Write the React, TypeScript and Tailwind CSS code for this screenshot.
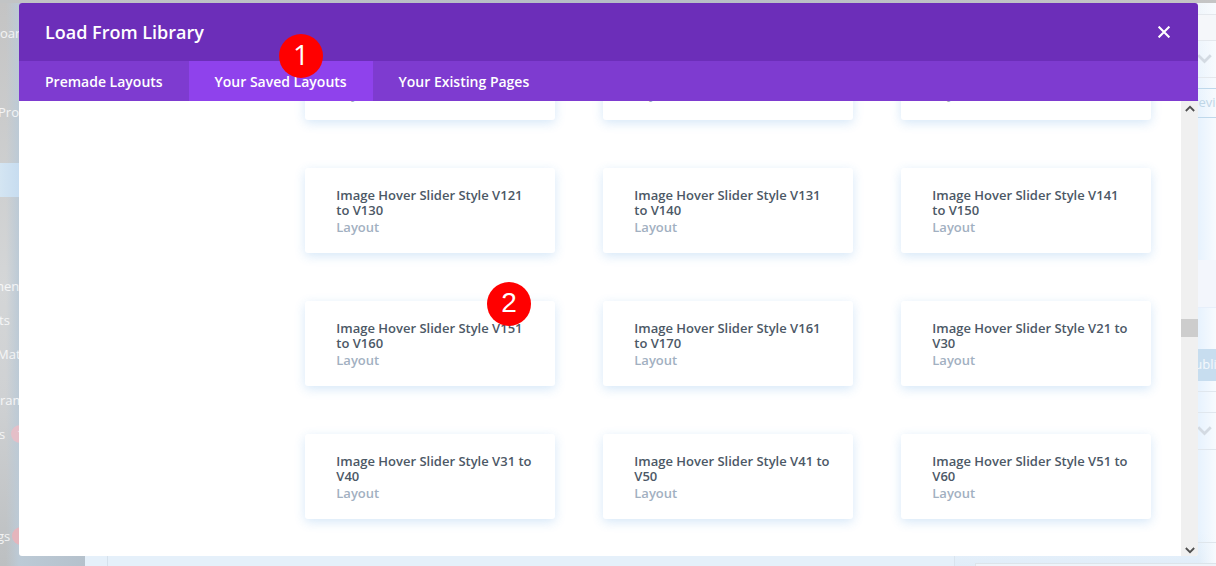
import React from "react";

const layouts: [string, string][] = [
  ["Image Hover Slider Style V1", "to V10"],
  ["Image Hover Slider Style V101", "to V110"],
  ["Image Hover Slider Style V111", "to V120"],
  ["Image Hover Slider Style V121", "to V130"],
  ["Image Hover Slider Style V131", "to V140"],
  ["Image Hover Slider Style V141", "to V150"],
  ["Image Hover Slider Style V151", "to V160"],
  ["Image Hover Slider Style V161", "to V170"],
  ["Image Hover Slider Style V21 to", "V30"],
  ["Image Hover Slider Style V31 to", "V40"],
  ["Image Hover Slider Style V41 to", "V50"],
  ["Image Hover Slider Style V51 to", "V60"],
];

function Chevron({ className, up = false }: { className: string; up?: boolean }) {
  return (
    <svg viewBox="0 0 12 8" className={className} fill="none" stroke="currentColor" strokeWidth="2.2">
      <path d={up ? "M1 7 6 2l5 5" : "M1 1l5 5 5-5"} />
    </svg>
  );
}

function Sidebar() {
  const item = "flex shrink-0 items-center whitespace-nowrap text-[13px] leading-[20px] text-white/80";
  return (
    <aside className="flex w-[85px] shrink-0 flex-col overflow-hidden bg-[linear-gradient(90deg,transparent_6px,#bccad6_19px,#b5c1cc_85px),linear-gradient(180deg,#c4c4c4,#d4d6d7_50%,#cfd1d3_70%,#bcbfc1)]">
      <div className={`${item} mt-[20px]`}>oard</div>
      <div className={`${item} mt-[59px] -ml-[2px]`}>Profile</div>
      <div className="mt-[41px] h-[34px] shrink-0 bg-gradient-to-r from-[#d4e5f2] to-[#c6dcf0] to-[20px]" />
      <div className={`${item} mt-[79px] -ml-[8px]`}>ments</div>
      <div className={`${item} mt-[14px] -ml-[1px]`}>ts</div>
      <div className={`${item} mt-[14px] -ml-[3px]`}>Material</div>
      <div className={`${item} mt-[26px]`}>rams</div>
      <div className={`${item} mt-[14px] -ml-[1px] gap-[6px]`}>
        <span>s</span>
        <span className="flex size-[18px] items-center justify-center rounded-full bg-[#e5bfc8] text-[10px]">1</span>
      </div>
      <div className={`${item} mt-[82px] -ml-[3px] gap-[2px]`}>
        <span>gs</span>
        <span className="size-[18px] rounded-full bg-[#e5b5bc]" />
      </div>
    </aside>
  );
}

function SettingsColumn() {
  return (
    <aside className="flex w-[262px] shrink-0 flex-col border-l border-[#d9e4ee] bg-[linear-gradient(90deg,transparent_244px,#f8fbfe_262px),linear-gradient(180deg,#f1f6fb,#e8f3fe_20%,#e8f3fe_94%,#e1edf8)] text-[13px]">
      <div className="mt-[11px] flex h-[27px] shrink-0 border-y border-[#e4e8ed] bg-[#f5f7fa]" />
      <div className="flex h-[37px] shrink-0 items-center justify-end border-b border-[#e4e8ed] pr-[4px] text-[#d3dae2]">
        <Chevron className="h-[10px] w-[15px]" />
      </div>
      <div className="mt-[10px] flex h-[30px] shrink-0 items-center justify-end overflow-hidden border-y border-[#bfd8eb] text-[#bfd6e7]">
        <span className="-mr-[17px]">Preview</span>
      </div>
      <div className="mt-[142px] h-[48px] shrink-0 border-b border-[#e7effa] bg-[#f3f6fc]" />
      <div className="mt-[41px] flex h-[32px] shrink-0 items-center justify-end overflow-hidden bg-[#c7ddef] text-white/80">
        <span className="-mr-[15px]">Publish</span>
      </div>
      <div className="mt-[10px] h-[22px] shrink-0 border-y border-[#e0e7ee]" />
      <div className="flex h-[37px] shrink-0 items-center justify-end border-b border-[#e0e7ee] pr-[4px] text-[#d3dae2]">
        <Chevron className="h-[10px] w-[15px]" />
      </div>
      <div className="h-[93px] shrink-0 border-b border-[#dfe6ec]" />
      <div className="mt-[20px] ml-[20px] h-[20px] shrink-0 border-t border-l border-[#dce4ea] bg-[#eef4fa]" />
    </aside>
  );
}

function StepBadge({ value, className }: { value: string; className: string }) {
  return (
    <div
      className={`absolute flex size-[44px] items-center justify-center rounded-full bg-[#ff0000] text-[28px] leading-none text-white ${className}`}
    >
      {value}
    </div>
  );
}

function LibraryDialog() {
  const tab = "flex items-center text-[14px] font-semibold text-white";
  return (
    <section className="absolute top-[3px] left-[19px] flex h-[553px] w-[1179px] flex-col overflow-hidden rounded-[3px] bg-white">
      <header className="flex h-[58px] shrink-0 items-center justify-between bg-[#6c2eb9] pr-[28px] pl-[26px] text-white">
        <h1 className="text-[18px] leading-[24px] font-semibold">Load From Library</h1>
        <button aria-label="Close">
          <svg viewBox="0 0 12 12" className="size-[12px]" fill="none" stroke="currentColor" strokeWidth="2.1">
            <path d="m.6.6 10.8 10.8M11.4.6.6 11.4" />
          </svg>
        </button>
      </header>
      <nav className="flex h-[40px] shrink-0 bg-[#7e3bd0]">
        <button className={`${tab} w-[170px] pl-[26px]`}>Premade Layouts</button>
        <button className={`${tab} w-[184px] bg-[#8f42ec] pl-[25.5px]`}>Your Saved Layouts</button>
        <button className={`${tab} pl-[25.5px]`}>Your Existing Pages</button>
      </nav>
      <div className="flex min-h-0 flex-1">
        <div className="flex-1 overflow-hidden pl-[286px]">
          <div className="-mt-[66px] grid grid-cols-[250px_250px_250px] gap-[48px]">
            {layouts.map(([first, second]) => (
              <article
                key={first}
                className="h-[85px] rounded-[3px] bg-white pt-[20px] pl-[31.3px] text-[13px] leading-[15px] font-semibold whitespace-nowrap text-[#4c5866] shadow-[0_3px_11px_rgba(43,135,218,0.2)]"
              >
                <h2>
                  {first}
                  <br />
                  {second}
                </h2>
                <p className="mt-[2px] text-[#a2b0c1]">Layout</p>
              </article>
            ))}
          </div>
        </div>
        <div className="flex w-[17px] shrink-0 flex-col items-center bg-[#f0f0f0] text-[#505050]">
          <Chevron up className="mt-[4px] h-[7px] w-[10px] shrink-0" />
          <div className="mt-[207px] h-[18px] w-full bg-[#cdcdcd]" />
          <Chevron className="mt-auto mb-[2px] h-[7px] w-[10px] shrink-0" />
        </div>
      </div>
    </section>
  );
}

export default function App() {
  return (
    <div className="relative flex h-[566px] w-[1216px] flex-col overflow-hidden font-['Open_Sans',sans-serif]">
      <div className="h-[3px] shrink-0 bg-gradient-to-r from-[#c2c4c5] via-[#b5bdc6] to-[#c5c5c5]" />
      <div className="flex min-h-0 flex-1">
        <Sidebar />
        <main className="flex flex-1 bg-[#e5f0fa] pl-[22px]">
          <div className="flex-1 border-l border-[#d5e1ec]" />
        </main>
        <SettingsColumn />
      </div>
      <LibraryDialog />
      <StepBadge value="1" className="top-[34px] left-[279px] pb-[4px] font-['Open_Sans',sans-serif]" />
      <StepBadge value="2" className="top-[282px] left-[487px] pb-[2px] font-['Liberation_Sans',sans-serif]" />
    </div>
  );
}
